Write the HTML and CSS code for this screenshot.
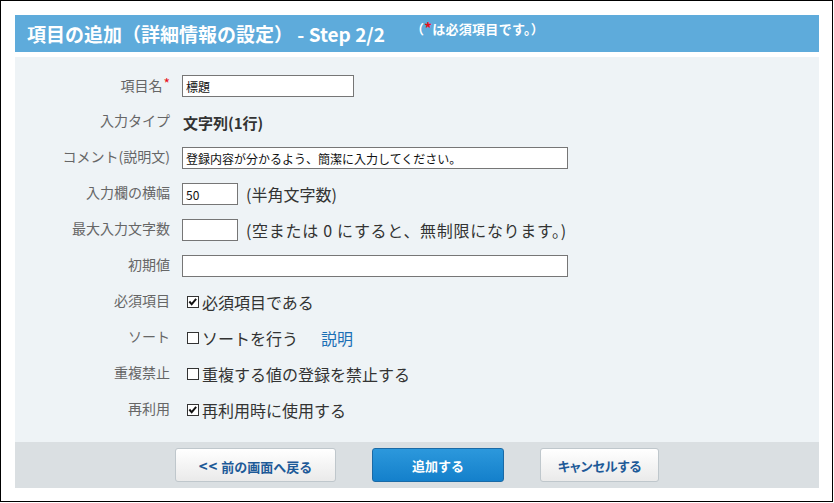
FILE: index.html
```html
<!DOCTYPE html>
<html lang="ja">
<head>
<meta charset="utf-8">
<title>項目の追加</title>
<link rel="stylesheet" href="styles.css">
</head>
<body>
<div class="frame">
  <div class="panel">
    <div class="head">
      <h1 class="title">項目の追加（詳細情報の設定） - Step 2/2</h1>
      <span class="note">（<span class="req">*</span>は必須項目です。）</span>
    </div>
    <div class="form">
      <div class="label">項目名<span class="req">*</span></div>
      <div class="field"><input class="text w-name" type="text" value="標題"></div>

      <div class="label">入力タイプ</div>
      <div class="field"><span class="strong">文字列(1行)</span></div>

      <div class="label">コメント(説明文)</div>
      <div class="field"><input class="text w-wide" type="text" value="登録内容が分かるよう、簡潔に入力してください。"></div>

      <div class="label">入力欄の横幅</div>
      <div class="field"><input class="text w-small" type="text" value="50"><span class="hint">(半角文字数)</span></div>

      <div class="label">最大入力文字数</div>
      <div class="field"><input class="text w-small" type="text" value=""><span class="hint hint-long">(空または 0 にすると、無制限になります。)</span></div>

      <div class="label">初期値</div>
      <div class="field"><input class="text w-wide" type="text" value=""></div>

      <div class="label">必須項目</div>
      <div class="field"><span class="check">
        <span class="box"><svg viewBox="0 0 12 12" width="10" height="10"><path d="M1.6 5.4 L4.4 8.6 L9.8 2.2" fill="none" stroke="#111" stroke-width="2.3"/></svg></span>必須項目である</span></div>

      <div class="label">ソート</div>
      <div class="field"><span class="check"><span class="box"></span>ソートを行う</span><a class="link" href="#">説明</a></div>

      <div class="label">重複禁止</div>
      <div class="field"><span class="check"><span class="box"></span>重複する値の登録を禁止する</span></div>

      <div class="label">再利用</div>
      <div class="field"><span class="check">
        <span class="box"><svg viewBox="0 0 12 12" width="10" height="10"><path d="M1.6 5.4 L4.4 8.6 L9.8 2.2" fill="none" stroke="#111" stroke-width="2.3"/></svg></span>再利用時に使用する</span></div>
    </div>
    <div class="foot">
      <button class="btn btn-back" type="button"><span class="arrows">&lt;&lt;</span> 前の画面へ戻る</button>
      <button class="btn btn-primary" type="button">追加する</button>
      <button class="btn btn-cancel" type="button">キャンセルする</button>
    </div>
  </div>
</div>
</body>
</html>
```

FILE: styles.css
```css
html, body {
  margin: 0;
  padding: 0;
  background: #fff;
}

body {
  font-family: "Noto Sans CJK JP", "Noto Sans", sans-serif;
  color: #333;
}

.frame {
  width: 833px;
  height: 502px;
  border: 1px solid #000;
  box-sizing: border-box;
  padding: 14px 0 0 14px;
}

.panel {
  width: 804px;
}

.head {
  height: 37px;
  background: #5eabdb;
  display: flex;
  align-items: flex-start;
  padding-left: 12px;
  box-sizing: border-box;
}

.title {
  margin: 0;
  font-size: 19px;
  line-height: 37px;
  font-weight: bold;
  color: #fff;
  white-space: nowrap;
}

.note {
  margin-left: 26px;
  margin-top: 5px;
  font-size: 13px;
  line-height: 16px;
  font-weight: bold;
  color: #fff;
  letter-spacing: 0.3px;
}

.note .req {
  color: #e8101a;
  font-size: 15px;
}

.form {
  margin-top: 5px;
  height: 385px;
  box-sizing: border-box;
  background: #eef3f6;
  padding: 11px 0 14px;
  display: grid;
  grid-template-columns: 155px 1fr;
  grid-auto-rows: 36px;
  column-gap: 12px;
  align-items: center;
}

.label {
  text-align: right;
  font-size: 14px;
  line-height: 18px;
  color: #666;
  padding-bottom: 4px;
  white-space: nowrap;
}

.label .req {
  color: #e8101a;
  font-size: 14px;
  vertical-align: 2px;
  margin-left: 1px;
}

.field {
  display: flex;
  align-items: center;
  white-space: nowrap;
}

.text {
  box-sizing: border-box;
  height: 22px;
  border: 1px solid #767676;
  border-radius: 0;
  background: #fff;
  padding: 0 3px;
  margin: 0;
  font-family: "Noto Sans CJK JP", "Noto Sans", sans-serif;
  font-size: 12px;
  color: #111;
  outline: none;
}

.w-name { width: 172px; }
.w-wide { width: 386px; }
.w-small { width: 56px; }

.strong {
  font-size: 15px;
  font-weight: bold;
  color: #333;
  margin-left: 1px;
}

.hint {
  font-size: 16px;
  line-height: 20px;
  color: #333;
  margin-left: 8px;
}

.hint-long {
  letter-spacing: 0.7px;
}

.check {
  display: inline-flex;
  align-items: center;
  font-size: 16px;
  line-height: 20px;
  color: #333;
}

.box {
  width: 12px;
  height: 12px;
  box-sizing: border-box;
  border: 1px solid #333;
  background: #fff;
  margin-left: 5px;
  margin-right: 3px;
  display: inline-flex;
  align-items: center;
  justify-content: center;
}

.box svg {
  display: block;
}

.link {
  font-size: 16px;
  line-height: 20px;
  color: #1a6fb5;
  text-decoration: none;
  margin-left: 23px;
}

.foot {
  height: 46px;
  background: #dadfe2;
  display: flex;
  justify-content: center;
  align-items: center;
  gap: 36px;
}

.btn {
  height: 34px;
  box-sizing: border-box;
  border: 1px solid #bfc7cc;
  border-radius: 3px;
  background: linear-gradient(#ffffff, #eaeaea);
  color: #1d5a98;
  font-family: "Noto Sans CJK JP", "Noto Sans", sans-serif;
  font-size: 13px;
  font-weight: bold;
  padding: 0;
  margin: 0;
  cursor: pointer;
}

.arrows {
  font-size: 15px;
  letter-spacing: 1px;
}

.btn-back { width: 161px; }
.btn-primary {
  width: 132px;
  background: linear-gradient(#2c98dc, #1480cb);
  border-color: #1a6aa6;
  color: #fff;
}
.btn-cancel {
  width: 119px;
  font-feature-settings: "palt";
}
```
